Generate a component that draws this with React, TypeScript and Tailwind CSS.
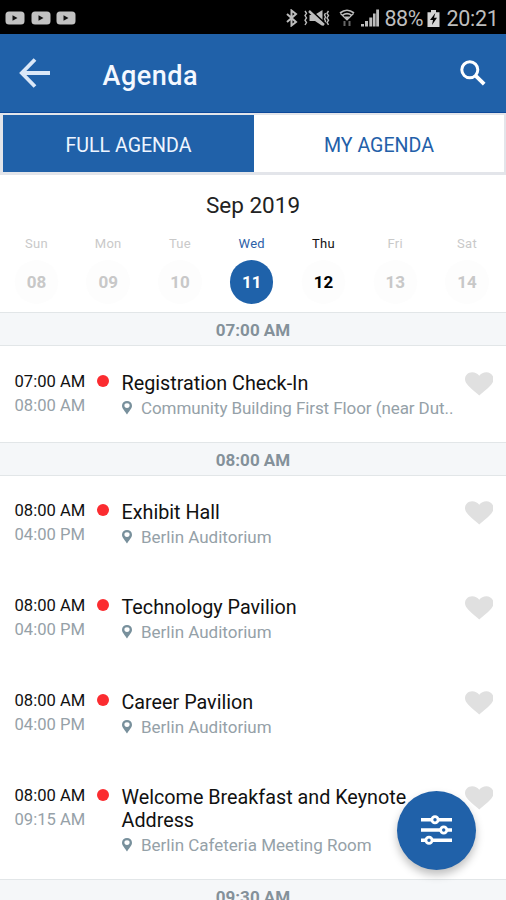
import React from "react";

const days = [
  { name: "Sun", date: "08", state: "off" },
  { name: "Mon", date: "09", state: "off" },
  { name: "Tue", date: "10", state: "off" },
  { name: "Wed", date: "11", state: "active" },
  { name: "Thu", date: "12", state: "on" },
  { name: "Fri", date: "13", state: "off" },
  { name: "Sat", date: "14", state: "off" },
];

const labelStyle: Record<string, string> = {
  off: "text-[#c9c9c9]",
  active: "text-[#2d5fa8]",
  on: "text-[#111]",
};
const dateStyle: Record<string, string> = {
  off: "bg-[#fdfdfd] text-[#c8c8c8]",
  active: "bg-[#1f62aa] text-white",
  on: "bg-[#fdfdfd] text-black",
};

function YouTubeBadge() {
  return (
    <svg width="20" height="14" viewBox="0 0 20 14">
      <rect x="0.5" y="0.5" width="19" height="13" rx="3.5" fill="#c2c2c2" />
      <path d="M7.5 4.300v5.400l5-2.700z" fill="#111" />
    </svg>
  );
}

function StatusBar() {
  return (
    <div className="flex h-[34px] shrink-0 items-center bg-black pl-[5px] pt-[1px] text-[#bdbdbd]">
      <div className="flex gap-[5.5px]">
        <YouTubeBadge />
        <YouTubeBadge />
        <YouTubeBadge />
      </div>
      <svg className="ml-[209px] shrink-0" width="14" height="18" viewBox="0 0 14 18" fill="none" stroke="currentColor" strokeWidth="2">
        <path d="M2 5l9 8-4.500 3.500v-15L11 5l-9 8" />
      </svg>
      <svg className="ml-[4px] shrink-0" width="28" height="18" viewBox="0 0 28 18" fill="none" stroke="currentColor" strokeWidth="1.400">
        <path d="M2 2l1.500 2.300L2 6.600l1.500 2.300L2 11.200l1.500 2.300L2 16M25.500 2L24 4.300l1.500 2.300L24 8.900l1.500 2.300L24 13.500l1.500 2.300M22.500 4l-1 2 1 2-1 2 1 2-1 2" />
        <path d="M6.500 6h5L19.500 1v16L12 12H6.500z" fill="currentColor" stroke="none" />
        <path d="M7.500 1L22 14.500" stroke="#000" strokeWidth="2" />
        <path d="M6 2l15 14" strokeWidth="2.400" />
      </svg>
      <svg className="ml-[8px] shrink-0" width="16" height="18" viewBox="0 0 16 18" fill="none" stroke="currentColor" strokeWidth="1.700">
        <path d="M1 4Q8-1.500 15 4M3.500 6.200Q8 3 12.500 6.200" />
        <path d="M1.500 4.500L8 11l6.500-6.500" strokeWidth="1.200" />
        <path d="M5.300 7.500h5.400L8 11z" fill="currentColor" stroke="none" />
        <path d="M5.500 12v5M10.500 12v5" stroke="#666" strokeWidth="2" />
      </svg>
      <svg className="ml-[6px] shrink-0" width="18" height="18" viewBox="0 0 18 18" fill="currentColor">
        <path d="M0 15h3v2.500H0zM4 12h3v5.500H4zM8.300 8.500h3V17.500h-3zM12 4.500h2.600v13H12zM15.200 0.500H18v17h-2.800z" />
      </svg>
      <span className="ml-[5.500px] mt-[2px] text-[21.500px] leading-none tracking-[-0.500px]">88%</span>
      <svg className="ml-[4.500px] mt-[1px] shrink-0" width="13" height="17" viewBox="0 0 13 17">
        <path d="M4 0h5v2.200h3.500V17H.5V2.200H4z" fill="#d5d5d5" />
        <path d="M8.300 3L3 10h3l-1 5 5-7.300H7z" fill="#000" />
      </svg>
      <span className="ml-[6px] mt-[2px] text-[21.500px] leading-none tracking-[-0.300px]">20:21</span>
    </div>
  );
}

function Band({ time }: { time: string }) {
  return (
    <div className="flex h-[34px] shrink-0 items-center justify-center border-y border-[#e2e6e8] bg-[#f5f7f9] pt-[1px] text-[17px] font-bold leading-[20px] text-[#84919a]">
      {time}
    </div>
  );
}

type ItemProps = { start: string; end: string; title: React.ReactNode; place: string; height: string; placeTracking?: string };

function Item({ start, end, title, place, height, placeTracking = "" }: ItemProps) {
  return (
    <div className={`flex shrink-0 items-start pl-[14.500px] ${height}`}>
      <div className="w-[82.500px] pt-[23px] text-[16.600px] leading-[23.500px]">
        <div className="text-[#111]">{start}</div>
        <div className="text-[#96a1a8]">{end}</div>
      </div>
      <div className="mt-[28px] size-[12px] rounded-full bg-[#fb2c30]" />
      <div className="ml-[12.500px] w-[343px] pt-[25px]">
        <div className="whitespace-nowrap text-[19.750px] leading-[23px] text-[#111]">{title}</div>
        <div className={`mt-[1px] flex items-center text-[17px] leading-[24px] text-[#95a1a8] ${placeTracking}`}>
          <svg width="10" height="14" viewBox="0 0 10 15" preserveAspectRatio="none" className="shrink-0">
            <path fillRule="evenodd" d="M5 0a5 5 0 0 0-5 5c0 3.300 3.300 6 5 9.500C6.700 11 10 8.300 10 5a5 5 0 0 0-5-5zm0 2.300a2.600 2.600 0 1 1 0 5.200 2.600 2.600 0 0 1 0-5.200z" fill="#78909c" />
          </svg>
          <span className="ml-[9.500px] whitespace-nowrap">{place}</span>
        </div>
      </div>
      <svg className="mt-[24.500px] shrink-0" width="28.500" height="24" viewBox="0 0 29 25" preserveAspectRatio="none">
        <path d="M14.500 24.500l-2-1.800C5 16.200 0 12.300 0 7.400 0 3.300 3.300.300 7.300.300c2.800 0 5.500 1.300 7.200 3.600C16.200 1.600 18.900.300 21.700.300c4 0 7.300 3 7.300 7.100 0 4.900-5 8.800-12.500 15.300z" fill="#e0e0e0" />
      </svg>
    </div>
  );
}

export default function App() {
  return (
    <div className="relative flex h-[900px] w-[506px] flex-col overflow-hidden bg-white font-['Roboto',sans-serif]">
      <StatusBar />
      <header className="flex h-[79px] shrink-0 items-center border-b border-[#0c489a] bg-[#2061a9] pl-[19px] pr-[20px]">
        <svg width="31" height="30" viewBox="0 0 31 30" fill="none" stroke="#dbe8f8" strokeWidth="3.800">
          <path d="M16 1.500L2.800 15 16 28.500M2.500 15H31" />
        </svg>
        <h1 className="ml-[52.500px] pt-[5px] text-[27px] font-medium leading-[32px] tracking-[0.500px] text-[#f4f8ff]">Agenda</h1>
        <svg className="ml-auto" width="26" height="26" viewBox="0 0 26 26" fill="none" stroke="#fff">
          <circle cx="9.800" cy="9.800" r="8" strokeWidth="3" />
          <path d="M15.800 15.800l8.400 8.400" strokeWidth="3.800" />
        </svg>
      </header>
      <nav className="flex h-[62px] shrink-0 border-2 border-l-[3px] border-b-[3px] border-[#e3e5ea] text-[19.600px]">
        <div className="flex w-[251px] items-center justify-center bg-[#2061a9] pt-[4px] text-[#eef5ff]">FULL AGENDA</div>
        <div className="flex flex-1 items-center justify-center pt-[4px] text-[#2360a9]">MY AGENDA</div>
      </nav>
      <section className="flex h-[137px] shrink-0 flex-col">
        <div className="mt-[16px] text-center text-[22.500px] leading-[28px] text-[#222]">Sep 2019</div>
        <div className="mt-[16px] flex w-[503px] pl-[0.500px]">
          {days.map((d) => (
            <div key={d.name} className="flex flex-1 flex-col items-center">
              <span className={`text-[13px] leading-[18px] tracking-[0.300px] ${labelStyle[d.state]}`}>{d.name}</span>
              <span className={`mt-[7px] flex size-[43.500px] items-center justify-center rounded-full pt-[2px] text-[17px] font-bold ${dateStyle[d.state]}`}>{d.date}</span>
            </div>
          ))}
        </div>
      </section>
      <Band time="07:00 AM" />
      <div className="flex shrink-0 flex-col pt-[1px]">
        <Item height="h-[95px]" start="07:00 AM" end="08:00 AM" title="Registration Check-In" place="Community Building First Floor (near Dut.." placeTracking="tracking-[-0.080px]" />
      </div>
      <Band time="08:00 AM" />
      <Item height="h-[95px]" start="08:00 AM" end="04:00 PM" title="Exhibit Hall" place="Berlin Auditorium" />
      <Item height="h-[95px]" start="08:00 AM" end="04:00 PM" title="Technology Pavilion" place="Berlin Auditorium" />
      <Item height="h-[95px]" start="08:00 AM" end="04:00 PM" title="Career Pavilion" place="Berlin Auditorium" />
      <Item height="h-[118px]" start="08:00 AM" end="09:15 AM" title={<>Welcome Breakfast and Keynote<br />Address</>} place="Berlin Cafeteria Meeting Room" />
      <Band time="09:30 AM" />
      <button className="absolute left-[397px] top-[791px] flex size-[79px] items-center justify-center rounded-full bg-[#2061a9] shadow-[0_5px_9px_rgba(0,0,0,0.25)]">
        <svg className="mb-[1px]" width="31" height="30" viewBox="0 0 31 30" fill="#2061a9" stroke="#fff" strokeWidth="2.800">
          <path d="M0 4.800h31M0 15h31M0 25.200h31" strokeWidth="3.400" />
          <circle cx="14" cy="4.800" r="3.100" />
          <circle cx="22.700" cy="15" r="3.100" />
          <circle cx="8" cy="25.200" r="3.100" />
        </svg>
      </button>
    </div>
  );
}
